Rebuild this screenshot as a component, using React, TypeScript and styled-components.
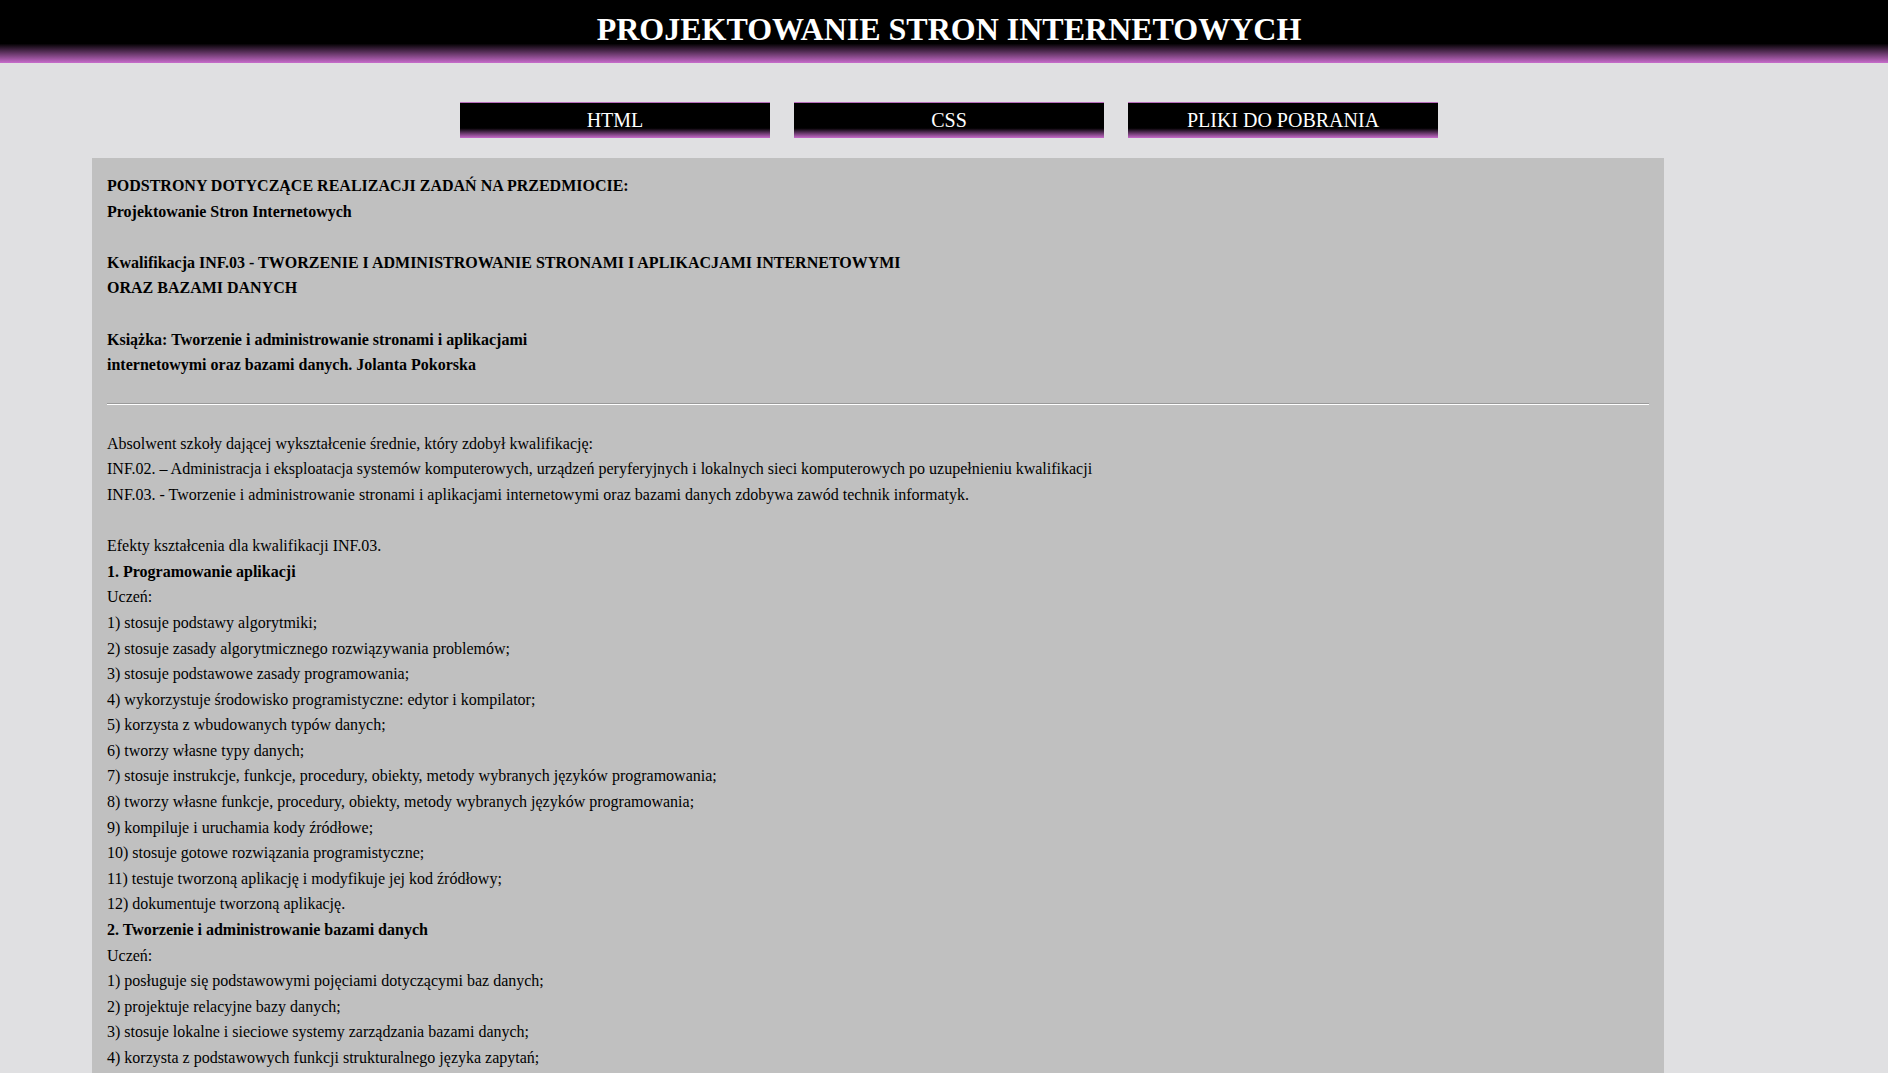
import React from 'react';
import styled, { createGlobalStyle } from 'styled-components';

const GlobalStyle = createGlobalStyle`
  html, body {
    margin: 0;
    padding: 0;
    background: #e0e0e2;
    font-family: "Liberation Serif", "Times New Roman", serif;
    color: #000;
  }
`;

const Header = styled.header`
  height: 63px;
  padding-left: 10px;
  box-sizing: border-box;
  background: linear-gradient(to bottom, #000 69%, #c86ccc 100%);
  text-align: center;
`;

const Title = styled.h1`
  margin: 0;
  padding-top: 11px;
  font-size: 32px;
  line-height: 36px;
  font-weight: bold;
  color: #fff;
`;

const Nav = styled.nav`
  display: flex;
  justify-content: center;
  gap: 24px;
  padding: 39px 0 20px 10px;
`;

const NavButton = styled.a`
  display: block;
  width: 310px;
  height: 36px;
  box-sizing: border-box;
  border-top: 1px solid #b86cbc;
  background: linear-gradient(to bottom, #000 72%, #c86ccc 100%);
  color: #fff;
  text-align: center;
  font-size: 20px;
  line-height: 35px;
  text-decoration: none;
  cursor: pointer;
`;

const Content = styled.main`
  margin-left: 92px;
  width: 1572px;
  box-sizing: border-box;
  padding: 15px 15px 30px;
  background: #c0c0c0;
  font-size: 16px;
  line-height: 25.6px;
`;

const Intro = styled.div`
  font-weight: bold;
`;

const Divider = styled.hr`
  margin: 25px 0 26px;
  border: none;
  border-top: 1px solid #9a9a9a;
  border-bottom: 1px solid #fff;
  height: 0;
`;

const Line = styled.div<{ $bold?: boolean }>`
  font-weight: ${({ $bold }) => ($bold ? 'bold' : 'normal')};
  min-height: 25.6px;
`;

const navItems = ['HTML', 'CSS', 'PLIKI DO POBRANIA'];

type Row = { text: string; bold?: boolean };

const rows: Row[] = [
  { text: 'Absolwent szkoły dającej wykształcenie średnie, który zdobył kwalifikację:' },
  { text: 'INF.02. – Administracja i eksploatacja systemów komputerowych, urządzeń peryferyjnych i lokalnych sieci komputerowych po uzupełnieniu kwalifikacji' },
  { text: 'INF.03. - Tworzenie i administrowanie stronami i aplikacjami internetowymi oraz bazami danych zdobywa zawód technik informatyk.' },
  { text: '' },
  { text: 'Efekty kształcenia dla kwalifikacji INF.03.' },
  { text: '1. Programowanie aplikacji', bold: true },
  { text: 'Uczeń:' },
  { text: '1) stosuje podstawy algorytmiki;' },
  { text: '2) stosuje zasady algorytmicznego rozwiązywania problemów;' },
  { text: '3) stosuje podstawowe zasady programowania;' },
  { text: '4) wykorzystuje środowisko programistyczne: edytor i kompilator;' },
  { text: '5) korzysta z wbudowanych typów danych;' },
  { text: '6) tworzy własne typy danych;' },
  { text: '7) stosuje instrukcje, funkcje, procedury, obiekty, metody wybranych języków programowania;' },
  { text: '8) tworzy własne funkcje, procedury, obiekty, metody wybranych języków programowania;' },
  { text: '9) kompiluje i uruchamia kody źródłowe;' },
  { text: '10) stosuje gotowe rozwiązania programistyczne;' },
  { text: '11) testuje tworzoną aplikację i modyfikuje jej kod źródłowy;' },
  { text: '12) dokumentuje tworzoną aplikację.' },
  { text: '2. Tworzenie i administrowanie bazami danych', bold: true },
  { text: 'Uczeń:' },
  { text: '1) posługuje się podstawowymi pojęciami dotyczącymi baz danych;' },
  { text: '2) projektuje relacyjne bazy danych;' },
  { text: '3) stosuje lokalne i sieciowe systemy zarządzania bazami danych;' },
  { text: '4) korzysta z podstawowych funkcji strukturalnego języka zapytań;' },
];

export default function App() {
  return (
    <>
      <GlobalStyle />
      <Header>
        <Title>PROJEKTOWANIE STRON INTERNETOWYCH</Title>
      </Header>
      <Nav>
        {navItems.map((item) => (
          <NavButton key={item}>{item}</NavButton>
        ))}
      </Nav>
      <Content>
        <Intro>
          PODSTRONY DOTYCZĄCE REALIZACJI ZADAŃ NA PRZEDMIOCIE:
          <br />
          Projektowanie Stron Internetowych
          <br />
          <br />
          Kwalifikacja INF.03 - TWORZENIE I ADMINISTROWANIE STRONAMI I APLIKACJAMI INTERNETOWYMI
          <br />
          ORAZ BAZAMI DANYCH
          <br />
          <br />
          Książka: Tworzenie i administrowanie stronami i aplikacjami
          <br />
          internetowymi oraz bazami danych. Jolanta Pokorska
        </Intro>
        <Divider />
        {rows.map((row, i) => (
          <Line key={i} $bold={row.bold}>
            {row.text}
          </Line>
        ))}
      </Content>
    </>
  );
}
